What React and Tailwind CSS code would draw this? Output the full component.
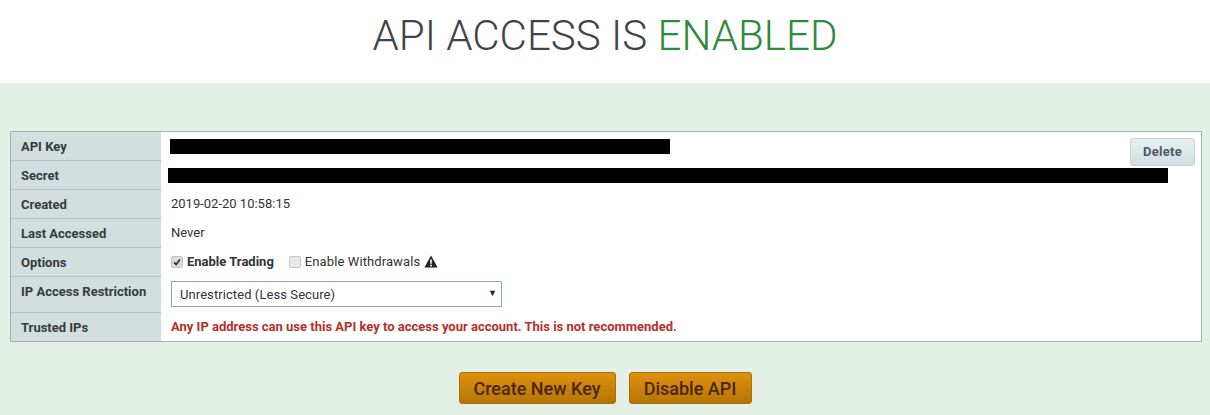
import React from "react";

const Row = ({ label, h = "h-[29px]", children, last, labelClass = "items-center pt-[2px]" }) => (
  <div className={`flex ${h}`}>
    <div className={`w-[150px] shrink-0 flex ${labelClass} pl-[10px] bg-[#d3dedf] text-[13px] font-bold text-[#333d40] ${last ? "" : "border-b border-[#b4c4c4]"}`}>
      {label}
    </div>
    <div className="flex-1 flex items-center text-[13px] text-[#333333] bg-white">{children}</div>
  </div>
);

export default function App() {
  return (
    <div className="w-[1210px] h-[415px] overflow-hidden bg-[#e4efe6] font-['Roboto',sans-serif]">
      <div className="h-[83px] bg-white flex items-start justify-center pt-[11px]">
        <h1 className="text-[42.1px] leading-[50px] font-light text-[#3f4448]">
          API ACCESS IS <span className="text-[#2e8b3a]">ENABLED</span>
        </h1>
      </div>
      <div className="mt-[48px] ml-[10px] mr-[8px] relative border border-[#9fb3b3] bg-white">
        <button className="absolute right-[6px] top-[6px] w-[65px] h-[28px] rounded-[3px] border border-[#c5d2d4] bg-gradient-to-b from-[#e9eff0] to-[#d3dee2] text-[13px] font-bold tracking-[0.3px] text-[#4b5a63]">
          Delete
        </button>
        <Row label="API Key">
          <div className="ml-[9px] w-[500px] h-[15px] bg-black" />
        </Row>
        <Row label="Secret">
          <div className="ml-[7px] w-[1000px] h-[15px] bg-black" />
        </Row>
        <Row label="Created">
          <span className="ml-[10px] -mt-[2px]">2019-02-20 10:58:15</span>
        </Row>
        <Row label="Last Accessed">
          <span className="ml-[10px] -mt-[2px]">Never</span>
        </Row>
        <Row label="Options">
          <div className="ml-[10px] -mt-[2px] flex items-center">
            <span className="w-[12px] h-[12px] rounded-[2px] bg-[#dcdcdc] border border-[#c4c4c4] flex items-center justify-center">
              <svg viewBox="0 0 12 12" className="w-[10px] h-[10px]">
                <path d="M2.5 6.5 L5 9 L9.5 3" fill="none" stroke="#333" strokeWidth="2" />
              </svg>
            </span>
            <span className="ml-[4px] font-bold">Enable Trading</span>
            <span className="ml-[15px] w-[12px] h-[12px] rounded-[2px] bg-[#e8e8e8] border border-[#c4c4c4]" />
            <span className="ml-[4px] tracking-[0.1px]">Enable Withdrawals</span>
            <svg viewBox="0 0 14 13" className="ml-[4px] w-[14px] h-[13px]">
              <path fillRule="evenodd" fill="#222" d="M7 .5 L13.6 12.5 H.4 Z M6.1 4.5 L6.4 9 H7.6 L7.9 4.5 Z M6.1 9.7 V11.2 H7.9 V9.7 Z" />
            </svg>
          </div>
        </Row>
        <Row label="IP Access Restriction" h="h-[36px]" labelClass="items-start pt-[5px]">
          <div className="ml-[10px] -mt-[2px] w-[331px] h-[26px] border border-[#8fa8a0] bg-white flex items-center justify-between pl-[8px] pr-[4px]">
            <span className="pt-[1px] tracking-[0.08px]">Unrestricted (Less Secure)</span>
            <span className="text-[9px] text-[#222]">▼</span>
          </div>
        </Row>
        <Row label="Trusted IPs" h="h-[28px]" last labelClass="items-center pt-[2px]">
          <span className="ml-[10px] font-bold text-[13px] text-[#b3302a]">
            Any IP address can use this API key to access your account. This is not recommended.
          </span>
        </Row>
      </div>
      <div className="mt-[30px] flex justify-center gap-[13px]">
        <button className="w-[157px] h-[32px] rounded-[3px] border border-[#a96f0a] bg-gradient-to-b from-[#e0900e] to-[#b57604] text-[18px] font-medium text-[#4a2704]">
          Create New Key
        </button>
        <button className="w-[123px] h-[32px] rounded-[3px] border border-[#a96f0a] bg-gradient-to-b from-[#e0900e] to-[#b57604] text-[18px] font-medium text-[#4a2704]">
          Disable API
        </button>
      </div>
    </div>
  );
}
